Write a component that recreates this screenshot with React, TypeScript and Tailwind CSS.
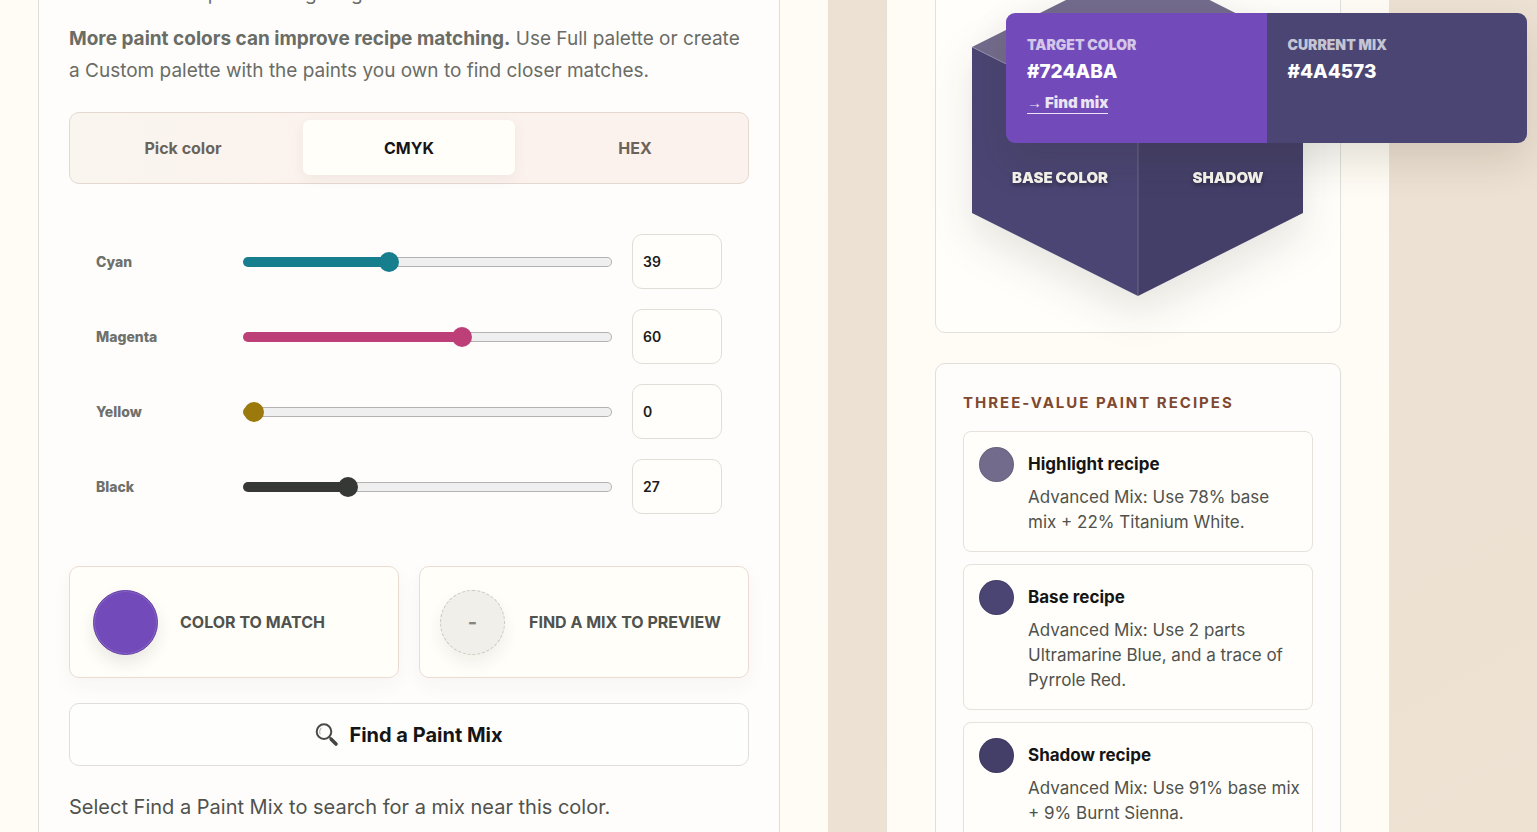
import { useState } from "react";
import type { CSSProperties } from "react";

const tabs = ["Pick color", "CMYK", "HEX"];

const channels = [
	{ id: "cyan", label: "Cyan", value: 39, color: "#177e8e" },
	{ id: "magenta", label: "Magenta", value: 60, color: "#bd3f78" },
	{ id: "yellow", label: "Yellow", value: 0, color: "#9b790c" },
	{ id: "black", label: "Black", value: 27, color: "#363835" },
];

const recipes = [
	{ id: 1, title: "Highlight recipe", swatch: "bg-[#736b8c]", text: "Advanced Mix: Use 78% base mix + 22% Titanium White." },
	{ id: 2, title: "Base recipe", swatch: "bg-[#4a4573]", text: "Advanced Mix: Use 2 parts Ultramarine Blue, and a trace of Pyrrole Red." },
	{ id: 3, title: "Shadow recipe", swatch: "bg-[#443f69]", text: "Advanced Mix: Use 91% base mix + 9% Burnt Sienna." },
];

const SearchIcon = () => (
	<svg viewBox="0 0 24 24" className="size-6" fill="none" aria-hidden="true">
		<circle cx="9" cy="8.6" r="7.3" stroke="#4a4a4a" strokeWidth="2" />
		<path d="M5.2 11.2C4.2 9 4.7 6.2 6.6 4.8" stroke="#9a9a9a" strokeWidth="0.9" />
		<path d="M14 13.8l2.2 2.2" stroke="#4a4a4a" strokeWidth="1.6" />
		<path d="M16.2 16.2l4.8 4.8" stroke="#444444" strokeWidth="3.6" strokeLinecap="round" />
	</svg>
);

const ModeTabs = () => {
	const [active, setActive] = useState("CMYK");
	return (
		<div role="tablist" className="mt-[25px] grid grid-cols-3 gap-[14px] rounded-[10px] border border-[#e4d8d0] bg-linear-to-r from-[#f9f5ef] to-[#fcf2ed] to-40% p-[7px] pb-2">
			{tabs.map((tab) => (
				<button
					key={tab}
					type="button"
					role="tab"
					aria-selected={active === tab}
					onClick={() => setActive(tab)}
					className={`h-[55px] rounded-[7px] text-base font-bold ${active === tab ? "bg-[#fffef9] text-[#151515] shadow-[0_4px_14px_rgba(60,50,30,0.06)]" : "text-[#6a635a]"}`}
				>
					{tab}
				</button>
			))}
		</div>
	);
};

const Channels = () => {
	const [values, setValues] = useState(channels.map((c) => c.value));
	const update = (index: number, value: number) =>
		setValues(values.map((v, i) => (i === index ? value : v)));

	return (
		<div className="mt-[50px] flex flex-col gap-5 px-[27px]">
			{channels.map((channel, i) => {
				const fill = `calc(10px + (100% - 20px) * ${values[i] / 100})`;
				const style = {
					"--thumb": channel.color,
					background: `linear-gradient(to right, ${channel.color} ${fill}, transparent ${fill}) border-box, linear-gradient(#efefef, #efefef) padding-box, linear-gradient(#b2b2b2, #b2b2b2) border-box`,
				} as CSSProperties;
				return (
					<div key={channel.id} className="grid grid-cols-[127px_1fr_90px] items-center gap-5">
						<label htmlFor={channel.id} className="text-sm font-extrabold text-[#6e706b]">{channel.label}</label>
						<input
							id={channel.id}
							type="range"
							min={0}
							max={100}
							value={values[i]}
							onChange={(e) => update(i, Number(e.target.value))}
							style={style}
							className="h-[10px] w-full appearance-none rounded-full border border-transparent [&::-webkit-slider-thumb]:size-5 [&::-webkit-slider-thumb]:appearance-none [&::-webkit-slider-thumb]:rounded-full [&::-webkit-slider-thumb]:bg-(--thumb)"
						/>
						<input
							type="text"
							inputMode="numeric"
							aria-label={`${channel.label} percent`}
							value={values[i]}
							onChange={(e) => update(i, Number(e.target.value) || 0)}
							className="h-[55px] w-full rounded-[10px] border border-[#dfdfd8] bg-[#fffefa] px-[10px] text-sm font-semibold text-[#1c1c1c]"
						/>
					</div>
				);
			})}
		</div>
	);
};

const Picker = () => (
	<section className="min-w-0 bg-[#fffcf5] pl-[38px] pr-12">
		<div className="min-h-screen border-x border-[#dfdeda] bg-[#fefdfc] px-[30px] pb-10">
			<div className="-mt-[22px] text-[19px] leading-8 text-[#6a6c66]">
				<p className="mb-[13px]">outside normal paint mixing range.</p>
				<p>
					<strong className="font-bold">More paint colors can improve recipe matching.</strong> Use Full palette or create a Custom palette with the paints you own to find closer matches.
				</p>
			</div>
			<ModeTabs />
			<Channels />
			<div className="mt-[52px] grid grid-cols-2 gap-5 text-base font-bold text-[#50524d]">
				<div className="flex h-28 items-center gap-[22px] rounded-[10px] border border-[#ebdcd3] bg-[#fffef9] px-[23px] shadow-[0_8px_20px_rgba(60,50,30,0.04)]">
					<span className="size-[65px] shrink-0 rounded-full border border-[#6541a8] bg-[#724aba] shadow-[inset_0_0_0_1px_rgba(255,255,255,0.15),0_8px_16px_rgba(40,40,20,0.1)]" />
					<span>COLOR TO MATCH</span>
				</div>
				<div className="flex h-28 items-center gap-6 rounded-[10px] border border-[#ebdcd3] bg-[#fffef9] px-5 shadow-[0_8px_20px_rgba(60,50,30,0.04)]">
					<span className="flex size-[65px] shrink-0 items-center justify-center rounded-full border border-dashed border-[#c9c7c0] bg-[#f1efe9] text-xl text-[#858680] shadow-[0_8px_16px_rgba(40,40,20,0.07)]">-</span>
					<span className="whitespace-nowrap">FIND A MIX TO PREVIEW</span>
				</div>
			</div>
			<button type="button" className="mt-[25px] flex h-[63px] w-full items-center justify-center gap-[10px] rounded-[10px] border border-[#dfdeda] bg-[#fefefd] text-xl font-bold text-[#151515]">
				<SearchIcon />
				Find a Paint Mix
			</button>
			<p className="mt-[25px] text-xl leading-8 text-[#50524d]">Select Find a Paint Mix to search for a mix near this color.</p>
		</div>
	</section>
);

const ValueCube = () => (
	<div className="-mt-[73px] rounded-[10px] border border-[#e2e1dc] bg-[#fffefa] p-9">
		<svg viewBox="0 0 332 332" className="w-full overflow-visible drop-shadow-[0_18px_20px_rgba(30,30,20,0.11)]">
			<polygon points="166,0 331,83 166,166 0,83" fill="#736b8c" />
			<polygon points="0,83 166,166 166,332 0,249" fill="#4a4573" />
			<polygon points="331,83 166,166 166,332 331,249" fill="#443f69" />
			<path d="M0 83L166 166V332M166 166L331 83" stroke="#ffffff" strokeOpacity="0.2" fill="none" />
			<g fill="#f6f4ee" fontSize="15" fontWeight="900" textAnchor="middle" className="[text-shadow:0_2px_4px_rgba(0,0,0,0.4)]">
				<text x="88" y="219">BASE COLOR</text>
				<text x="256" y="219">SHADOW</text>
			</g>
		</svg>
	</div>
);

const Recipes = () => (
	<div className="mt-[30px] rounded-[10px] border border-[#e0dfdb] bg-[#fefdfc] px-[27px] pb-7 pt-[27px]">
		<h2 className="text-[15px] leading-6 font-bold tracking-[2px] text-[#80492f]">THREE-VALUE PAINT RECIPES</h2>
		<ul className="mt-4 flex flex-col gap-3">
			{recipes.map((recipe) => (
				<li key={recipe.id} className="flex gap-[14px] rounded-lg border border-[#e6e1da] bg-[#fffefa] pb-4 pl-[15px] pr-[11px] pt-[15px]">
					<span className={`size-[35px] shrink-0 rounded-full border border-black/10 ${recipe.swatch}`} />
					<div>
						<h3 className="text-[17px] leading-[35px] font-bold text-[#151515]">{recipe.title}</h3>
						<p className="mt-[3px] text-[17px] leading-[25px] text-[#50524d]">{recipe.text}</p>
					</div>
				</li>
			))}
		</ul>
	</div>
);

const ComparePopup = () => (
	<div className="fixed right-[10px] top-[13px] z-10 grid w-[521px] grid-cols-2 overflow-hidden rounded-[9px] text-sm font-black text-white shadow-[0_18px_40px_rgba(50,40,20,0.14)]">
		<div className="h-[130px] bg-[#724aba] px-[21px] pt-[21px]">
			<p className="leading-[22px] text-white/70">TARGET COLOR</p>
			<p className="text-[19px] leading-8 font-extrabold">#724ABA</p>
			<a href="#find" className="mt-[5px] inline-block border-b border-white/85 text-[15px] leading-5 text-white/85">
				<span className="font-['Liberation_Serif'] font-normal">→</span> Find mix
			</a>
		</div>
		<div className="h-[130px] bg-[#4a4573] px-[21px] pt-[21px]">
			<p className="leading-[22px] text-white/70">CURRENT MIX</p>
			<p className="text-[19px] leading-8 font-extrabold">#4A4573</p>
		</div>
	</div>
);

const App = () => {
	return (
		<main className="grid min-h-screen grid-cols-[828fr_503fr] gap-[58px] overflow-hidden bg-linear-to-br from-[#ebe0d2] to-[#eee2d3] pr-[148px] font-[Inter,sans-serif]">
			<Picker />
			<aside className="min-w-0 border-l border-[#e6e0d8] bg-[#fffcf5] px-12">
				<ValueCube />
				<Recipes />
			</aside>
			<ComparePopup />
		</main>
	);
};

export default App;
